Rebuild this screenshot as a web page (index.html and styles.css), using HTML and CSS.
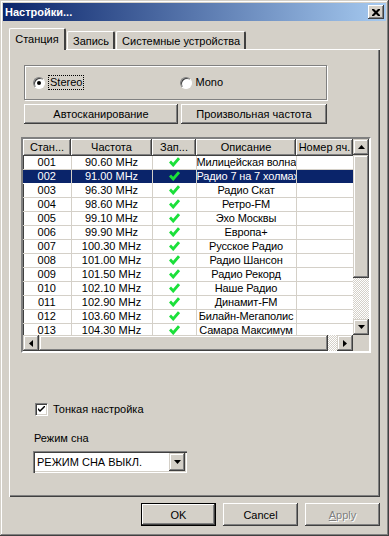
FILE: index.html
```html
<!DOCTYPE html>
<html>
<head>
  <meta charset="UTF-8">
  <title>Настройки...</title>
  <link rel="stylesheet" href="styles.css">
</head>
<body>

<div class="window">
  <div class="titlebar">
    <span class="title">Настройки...</span>
    <span class="close">
      <svg width="8" height="7" viewBox="0 0 8 7"><path d="M0 0h2l2 2 2-2h2v1l-2.5 2.5 2.5 2.5v1h-2l-2-2-2 2h-2v-1l2.5-2.5-2.5-2.5z" fill="#000"/></svg>
    </span>
  </div>

  <div class="content">
    <div class="tabs">
      <div class="tab active">Станция</div>
      <div class="tab">Запись</div>
      <div class="tab">Системные устройства</div>
    </div>

    <div class="panel">
      <div class="groupbox">
        <label class="radio"><span class="radio-dot on"></span><span class="focus">Stereo</span></label>
        <label class="radio"><span class="radio-dot"></span><span>Mono</span></label>
      </div>

      <div class="btn-row">
        <button class="btn scan">Автосканирование</button>
        <button class="btn freq">Произвольная частота</button>
      </div>

      <div class="list">
        <div class="grid-area">
          <table class="stations">
            <colgroup>
              <col style="width:48px"><col style="width:81px"><col style="width:44px"><col style="width:100px"><col style="width:57px">
            </colgroup>
            <thead>
              <tr><th>Стан...</th><th>Частота</th><th>Зап...</th><th>Описание</th><th>Номер яч.</th></tr>
            </thead>
            <tbody id="rows"></tbody>
          </table>
        </div>
        <div class="vscroll">
          <span class="sb-btn"><svg width="7" height="4" viewBox="0 0 7 4"><path d="M3.5 0L7 4H0z" fill="#000"/></svg></span>
          <span class="sb-thumb"></span>
          <span class="sb-track"></span>
          <span class="sb-btn"><svg width="7" height="4" viewBox="0 0 7 4"><path d="M0 0h7L3.5 4z" fill="#000"/></svg></span>
        </div>
        <div class="hscroll">
          <span class="sb-btn"><svg width="4" height="7" viewBox="0 0 4 7"><path d="M0 3.5L4 0v7z" fill="#000"/></svg></span>
          <span class="sb-thumb"></span>
          <span class="sb-track"></span>
          <span class="sb-btn"><svg width="4" height="7" viewBox="0 0 4 7"><path d="M0 0l4 3.5L0 7z" fill="#000"/></svg></span>
        </div>
        <div class="corner"></div>
      </div>

      <label class="check-row">
        <span class="checkbox"><svg width="7" height="7" viewBox="0 0 7 7"><path d="M0 2v2l2 2 5-5V-1L2 4z" fill="#000"/></svg></span>
        <span>Тонкая настройка</span>
      </label>

      <div class="sleep-label">Режим сна</div>
      <div class="combo">
        <span class="combo-text">РЕЖИМ СНА ВЫКЛ.</span>
        <span class="combo-btn"><svg width="7" height="4" viewBox="0 0 7 4"><path d="M0 0h7L3.5 4z" fill="#000"/></svg></span>
      </div>
    </div>

    <div class="footer">
      <button class="btn default">OK</button>
      <button class="btn">Cancel</button>
      <button class="btn disabled"><u>A</u>pply</button>
    </div>
  </div>
</div>

<script>
  const stations = [
    ["001", "90.60 MHz", "Милицейская волна"],
    ["002", "91.00 MHz", "Радио 7 на 7 холмах"],
    ["003", "96.30 MHz", "Радио Скат"],
    ["004", "98.60 MHz", "Ретро-FM"],
    ["005", "99.10 MHz", "Эхо Москвы"],
    ["006", "99.90 MHz", "Европа+"],
    ["007", "100.30 MHz", "Русское Радио"],
    ["008", "101.00 MHz", "Радио Шансон"],
    ["009", "101.50 MHz", "Радио Рекорд"],
    ["010", "102.10 MHz", "Наше Радио"],
    ["011", "102.90 MHz", "Динамит-FM"],
    ["012", "103.60 MHz", "Билайн-Мегаполис"],
    ["013", "104.30 MHz", "Самара Максимум"]
  ];

  const tick = '<svg width="11" height="10" viewBox="0 0 11 10"><path d="M1 4.5l3.2 3.5L10 1.2" fill="none" stroke="#1be03a" stroke-width="2.8"/></svg>';
  const rows = document.getElementById("rows");

  stations.forEach((s, i) => {
    const tr = document.createElement("tr");
    if (i === 1) tr.className = "selected";
    tr.innerHTML = `<td>${s[0]}</td><td>${s[1]}</td><td>${tick}</td><td class="desc">${s[2]}</td><td></td>`;
    rows.appendChild(tr);
  });
</script>

</body>
</html>
```

FILE: styles.css
```css
body {
  margin: 0;
  background: #d4d0c8;
  font-family: "Liberation Sans", Arial, sans-serif;
  font-size: 11px;
  line-height: 13px;
  color: #000;
}

.window {
  width: 389px;
  height: 536px;
  box-sizing: border-box;
  padding: 3px;
  background: #d4d0c8;
  box-shadow: inset -1px -1px #404040, inset 1px 1px #d4d0c8, inset -2px -2px #808080, inset 2px 2px #fff;
}

.titlebar {
  height: 18px;
  display: flex;
  align-items: center;
  justify-content: space-between;
  padding: 0 2px 0 2px;
  background: linear-gradient(to right, #0a246a, #a6caf0);
}

.title {
  color: #fff;
  font-weight: bold;
  font-size: 11px;
}

.close {
  width: 16px;
  height: 14px;
  box-sizing: border-box;
  display: flex;
  align-items: center;
  justify-content: center;
  background: #d4d0c8;
  box-shadow: inset -1px -1px #404040, inset 1px 1px #fff, inset -2px -2px #808080;
}

.content {
  padding: 7px 6px 0 6px;
}

.tabs {
  display: flex;
  align-items: flex-end;
  height: 21px;
  position: relative;
  z-index: 1;
}

.tab {
  height: 18px;
  box-sizing: border-box;
  padding: 3px 4px 0 5px;
  margin-right: 1px;
  border-top: 1px solid #fff;
  border-left: 1px solid #fff;
  border-right: 2px solid #404040;
  border-top-left-radius: 2px;
  border-top-right-radius: 2px;
  white-space: nowrap;
}

.tab.active {
  width: 57px;
  height: 22px;
  margin-bottom: -1px;
  padding: 4px 0 0 0;
  text-align: center;
  background: #d4d0c8;
}

.panel {
  width: 371px;
  height: 448px;
  box-sizing: border-box;
  padding: 15px 0 0 14px;
  border-top: 1px solid #fff;
  border-left: 1px solid #fff;
  box-shadow: inset -1px -1px #404040, inset -2px -2px #808080;
}

.groupbox {
  width: 303px;
  height: 35px;
  box-sizing: border-box;
  display: flex;
  align-items: center;
  padding-left: 8px;
  border: 1px solid #808080;
  box-shadow: inset 1px 1px #fff, 1px 1px #fff;
}

.radio {
  width: 147px;
  display: flex;
  align-items: center;
  gap: 4px;
}

.radio-dot {
  width: 12px;
  height: 12px;
  box-sizing: border-box;
  border-radius: 50%;
  background: #fff;
  border: 1px solid;
  border-color: #808080 #fff #fff #808080;
  box-shadow: inset 1px 1px #404040;
  display: flex;
  align-items: center;
  justify-content: center;
}

.radio-dot.on::after {
  content: "";
  width: 4px;
  height: 4px;
  border-radius: 50%;
  background: #000;
}

.focus {
  outline: 1px dotted #000;
  outline-offset: 0;
  padding: 0 1px;
}

.btn-row {
  display: flex;
  gap: 3px;
  margin-top: 4px;
}

.btn {
  height: 20px;
  box-sizing: border-box;
  border: none;
  padding: 0;
  background: #d4d0c8;
  font-family: "Liberation Sans", Arial, sans-serif;
  font-size: 11px;
  color: #000;
  box-shadow: inset -1px -1px #404040, inset 1px 1px #fff, inset -2px -2px #808080;
}

.btn.scan {
  width: 154px;
}

.btn.freq {
  width: 146px;
}

.list {
  width: 350px;
  height: 216px;
  box-sizing: border-box;
  margin: 13px 0 0 -3px;
  border: 2px solid;
  border-color: #808080 #fff #fff #808080;
  box-shadow: inset 1px 1px #404040;
  display: grid;
  grid-template-columns: 330px 16px;
  grid-template-rows: 196px 16px;
  background: #fff;
}

.grid-area {
  overflow: hidden;
}

.stations {
  table-layout: fixed;
  border-collapse: collapse;
  width: 330px;
}

.stations th {
  height: 17px;
  padding: 0;
  font-weight: normal;
  background: #d4d0c8;
  box-shadow: inset -1px -1px #404040, inset 1px 1px #fff, inset -2px -2px #808080;
  white-space: nowrap;
  overflow: hidden;
}

.stations td {
  height: 13px;
  padding: 0 1px;
  text-align: center;
  line-height: 13px;
  border-right: 1px solid #d4d0c8;
  border-bottom: 1px solid #d4d0c8;
  white-space: nowrap;
  overflow: hidden;
}

.stations td.desc {
  padding: 0;
  letter-spacing: -0.15px;
}

.stations td svg {
  vertical-align: -1px;
}

.stations tr.selected td {
  background: #0a246a;
  color: #fff;
  border-top: 1px dotted #fff;
  border-bottom: 1px dotted #fff;
}

.vscroll, .hscroll {
  display: flex;
  background: #d4d0c8;
}

.vscroll {
  flex-direction: column;
}

.sb-btn {
  width: 16px;
  height: 16px;
  flex: none;
  box-sizing: border-box;
  display: flex;
  align-items: center;
  justify-content: center;
  background: #d4d0c8;
  box-shadow: inset -1px -1px #404040, inset 1px 1px #d4d0c8, inset -2px -2px #808080, inset 2px 2px #fff;
}

.sb-thumb {
  flex: none;
  background: #d4d0c8;
  box-shadow: inset -1px -1px #404040, inset 1px 1px #d4d0c8, inset -2px -2px #808080, inset 2px 2px #fff;
}

.vscroll .sb-thumb {
  height: 123px;
}

.hscroll .sb-thumb {
  width: 289px;
}

.sb-track {
  flex: 1;
  background: repeating-conic-gradient(#fff 0 25%, #d4d0c8 0 50%) 0 0 / 2px 2px;
}

.corner {
  background: #d4d0c8;
}

.check-row {
  display: flex;
  align-items: center;
  gap: 5px;
  margin: 50px 0 0 11px;
}

.checkbox {
  width: 13px;
  height: 13px;
  box-sizing: border-box;
  display: flex;
  align-items: center;
  justify-content: center;
  background: #fff;
  border: 1px solid;
  border-color: #808080 #fff #fff #808080;
  box-shadow: inset 1px 1px #404040, inset -1px -1px #d4d0c8;
}

.sleep-label {
  margin: 16px 0 0 10px;
}

.combo {
  width: 154px;
  height: 22px;
  box-sizing: border-box;
  margin: 6px 0 0 9px;
  display: flex;
  align-items: center;
  justify-content: space-between;
  padding: 2px;
  background: #fff;
  box-shadow: inset 1px 1px #808080, inset 2px 2px #404040, inset -1px -1px #fff, inset -2px -2px #d4d0c8;
}

.combo-text {
  padding-left: 2px;
}

.combo-btn {
  width: 16px;
  height: 18px;
  box-sizing: border-box;
  display: flex;
  align-items: center;
  justify-content: center;
  background: #d4d0c8;
  box-shadow: inset -1px -1px #404040, inset 1px 1px #d4d0c8, inset -2px -2px #808080, inset 2px 2px #fff;
}

.footer {
  display: flex;
  justify-content: flex-end;
  gap: 7px;
  margin-top: 6px;
}

.footer .btn {
  width: 75px;
  height: 23px;
}

.btn.default {
  border: 1px solid #000;
}

.btn.disabled {
  color: #808080;
  text-shadow: 1px 1px #fff;
}
```
